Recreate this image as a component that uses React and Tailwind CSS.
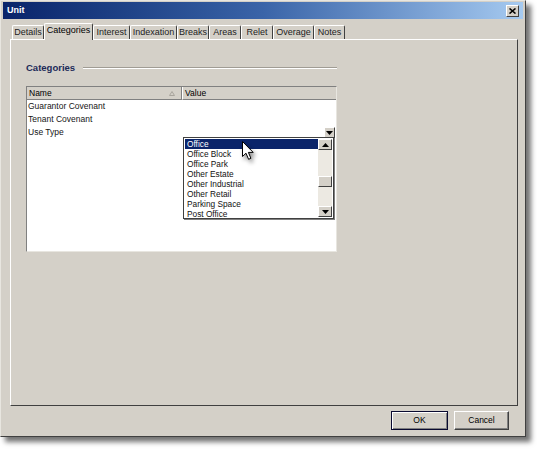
import React from "react";

const tabs = [
  { label: "Details", w: "w-[32px]" },
  { label: "Categories", w: "w-[49px]", active: true },
  { label: "Interest", w: "w-[37px]" },
  { label: "Indexation", w: "w-[47px]" },
  { label: "Breaks", w: "w-[32px]" },
  { label: "Areas", w: "w-[32px]" },
  { label: "Relet", w: "w-[32px]" },
  { label: "Overage", w: "w-[41px]" },
  { label: "Notes", w: "w-[31px]" },
];

const rows = ["Guarantor Covenant", "Tenant Covenant", "Use Type"];

const options = [
  "Office",
  "Office Block",
  "Office Park",
  "Other Estate",
  "Other Industrial",
  "Other Retail",
  "Parking Space",
  "Post Office",
];

const Arrow = ({ down }) => (
  <svg width="7" height="4" viewBox="0 0 7 4">
    {down ? <path d="M0 0h7L3.5 4z" fill="#000" /> : <path d="M0 4h7L3.5 0z" fill="#000" />}
  </svg>
);

const ScrollBtn = ({ down, className = "" }) => (
  <div
    className={`flex items-center justify-center bg-[#d4d0c8] border border-t-white border-l-white border-r-[#404040] border-b-[#404040] ${className}`}
  >
    <Arrow down={down} />
  </div>
);

export default function App() {
  return (
    <div className="w-[537px] h-[449px] bg-white font-['Liberation_Sans',Arial,sans-serif] text-black">
      <div className="relative w-[526px] h-[437px] flex flex-col bg-[#d4d0c8] border border-t-[#e8e6e0] border-l-[#e8e6e0] border-r-[#404040] border-b-[#404040] shadow-[5px_5px_5px_rgba(0,0,0,0.55)]">
        {/* title bar */}
        <div className="mx-[2px] mt-[1px] h-[17px] flex items-center justify-between bg-gradient-to-r from-[#0a246a] via-[#3a64a8] to-[#a6caf0] pl-[4px] pr-[4px]">
          <span className="text-white font-bold text-[9px]">Unit</span>
          <div className="w-[13px] h-[12px] flex items-center justify-center bg-[#d4d0c8] border border-t-white border-l-white border-r-[#404040] border-b-[#404040]">
            <svg width="7" height="6" viewBox="0 0 7 6">
              <path d="M0.5 0.5L6.5 5.5M6.5 0.5L0.5 5.5" stroke="#000" strokeWidth="1.6" />
            </svg>
          </div>
        </div>

        {/* tabs */}
        <div className="ml-[11px] mt-[3px] h-[17px] flex items-end">
          {tabs.map((t) => (
            <div
              key={t.label}
              className={`${t.w} flex items-center justify-center text-[9px] border-t border-l border-r border-t-white border-l-white border-r-[#404040] rounded-t-[2px] ${
                t.active ? "h-[17px] bg-[#d4d0c8] relative z-10 -mb-px pb-[3px]" : "h-[14px] text-[#222]"
              }`}
            >
              {t.label}
            </div>
          ))}
        </div>

        {/* panel */}
        <div className="ml-[9px] mr-[7px] h-[367px] border border-t-white border-l-white border-r-[#404040] border-b-[#404040] pl-[15px] pt-[21px]">
          <div className="flex items-center w-[311px] gap-[8px]">
            <span className="font-bold text-[9.5px] text-[#1c2a58]">Categories</span>
            <div className="flex-1 h-[2px] border-t border-t-[#a09c94] border-b border-b-white" />
          </div>

          <div className="relative mt-[11px] w-[311px] h-[166px] bg-white border border-t-[#808080] border-l-[#808080] border-r-[#e8e6e0] border-b-[#e8e6e0]">
            {/* header */}
            <div className="flex h-[13px] text-[8.5px] bg-[#d4d0c8]">
              <div className="w-[155px] flex items-center justify-between pl-[2px] pr-[6px] border-r border-r-[#808080] border-b border-b-[#808080]">
                <span>Name</span>
                <svg width="6" height="5" viewBox="0 0 6 5">
                  <path d="M0.5 4.5h5L3 0.5z" fill="none" stroke="#a8a49c" />
                </svg>
              </div>
              <div className="flex-1 flex items-center pl-[2px] border-b border-b-[#808080] border-l border-l-white">
                Value
              </div>
            </div>
            {rows.map((r, i) => (
              <div key={r} className="flex h-[13px] items-center text-[8.5px] pl-[1px] text-[#151515]">
                <span className="w-[155px]">{r}</span>
                {i === 2 && (
                  <div className="ml-auto mr-[1px] w-[11px] h-[11px] flex items-center justify-center bg-[#d4d0c8] border border-t-white border-l-white border-r-[#404040] border-b-[#404040]">
                    <Arrow down />
                  </div>
                )}
              </div>
            ))}

            {/* dropdown list */}
            <div className="absolute left-[156px] top-[50px] w-[151px] h-[82px] flex bg-white border border-[#404040] shadow-[1px_1px_0_#808080] p-[1px]">
              <div className="flex-1 flex flex-col">
                {options.map((o, i) => (
                  <div
                    key={o}
                    className={`h-[10px] leading-[10px] text-[8.3px] pl-[2px] ${
                      i === 0 ? "bg-[#0a246a] text-white" : "text-[#111]"
                    }`}
                  >
                    {o}
                  </div>
                ))}
              </div>
              <div className="w-[14px] flex flex-col bg-[#ece9e2]">
                <ScrollBtn className="h-[11px]" />
                <div className="flex-1 flex flex-col">
                  <div className="h-[26px]" />
                  <div className="h-[11px] bg-[#d4d0c8] border border-t-white border-l-white border-r-[#404040] border-b-[#404040]" />
                </div>
                <ScrollBtn down className="h-[11px]" />
              </div>
            </div>
          </div>
        </div>

        {/* footer buttons */}
        <div className="flex justify-end gap-[6px] pr-[16px] pt-[5px]">
          <button className="w-[57px] h-[19px] text-[8.5px] bg-[#d4d0c8] border border-[#0a0a30] shadow-[inset_1px_1px_0_white,inset_-1px_-1px_0_#808080]">
            OK
          </button>
          <button className="w-[55px] h-[19px] text-[8.5px] bg-[#d4d0c8] border border-t-white border-l-white border-r-[#404040] border-b-[#404040] shadow-[inset_-1px_-1px_0_#808080]">
            Cancel
          </button>
        </div>

        {/* mouse cursor */}
        <svg
          className="absolute left-[241px] top-[140px] drop-shadow-[2px_3px_2px_rgba(0,0,0,0.45)]"
          width="13"
          height="20"
          viewBox="0 0 13 20"
        >
          <path
            d="M0.5 0.5V15.5L4 12.2L6.6 18.3L8.9 17.3L6.4 11.4H11.2z"
            fill="#fff"
            stroke="#000"
            strokeWidth="1"
            strokeLinejoin="round"
          />
        </svg>
      </div>
    </div>
  );
}
